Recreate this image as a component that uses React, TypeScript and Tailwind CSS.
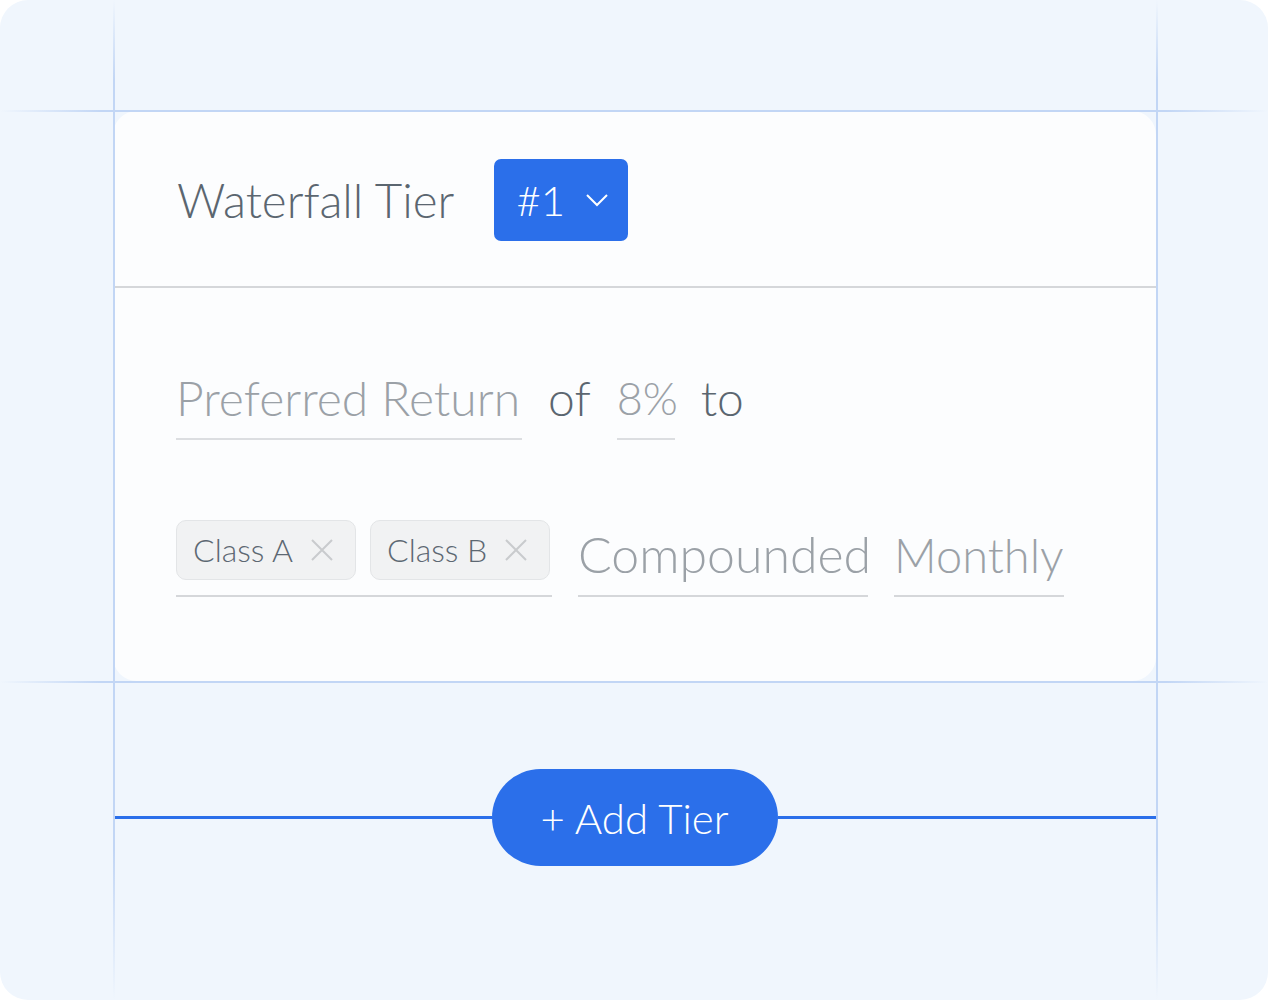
import React from 'react';

const font = { fontFamily: '"Lato", "Liberation Sans", sans-serif' };

const Chip: React.FC<{ label: string }> = ({ label }) => (
  <div className="flex items-center h-[60px] pl-[16px] pr-[22px] gap-[18px] rounded-[10px] bg-[#f1f2f3] border border-[#e3e5e7]">
    <span className="text-[32px] font-light text-[#5d6872] leading-none whitespace-nowrap">{label}</span>
    <svg width="22" height="22" viewBox="0 0 22 22" className="text-[#c9cbcd]">
      <path d="M1 1 L21 21 M21 1 L1 21" stroke="currentColor" strokeWidth="2" fill="none" />
    </svg>
  </div>
);

const Field: React.FC<{ text: string; w: string; size: string; line: string }> = ({ text, w, size, line }) => (
  <div className={`flex flex-col gap-[16px] ${w}`}>
    <span className={`${size} font-light text-[#9ba1a7] leading-[1] whitespace-nowrap`}>{text}</span>
    <div className={`h-[2px] ${line}`} />
  </div>
);

export default function App() {
  return (
    <div className="w-[1268px] h-[1000px] bg-white" style={font}>
      <div className="relative w-full h-full rounded-[28px] bg-[#f0f6fd] overflow-hidden pt-[111px] pl-[113px]">
        {/* card */}
        <div className="relative w-[1043px] h-[570px] bg-[#fcfdfe] rounded-[24px] flex flex-col">
          <div className="h-[177px] flex items-center pl-[64px] gap-[40px] border-b-2 border-[#d5d7da] pt-[2px]">
            <span className="text-[47.5px] font-light text-[#5b6670] leading-none whitespace-nowrap">Waterfall Tier</span>
            <div className="flex items-center gap-[20px] h-[82px] w-[134px] pl-[22px] rounded-[7px] bg-[#2b6fea] text-white">
              <span className="text-[42px] font-light leading-none">#1</span>
              <svg width="24" height="24" viewBox="0 0 24 24">
                <path d="M2 7 L12 17 L22 7" stroke="white" strokeWidth="2" fill="none" />
              </svg>
            </div>
          </div>

          <div className="flex flex-col pl-[63px] pt-[86px] gap-[80px]">
            <div className="flex items-end gap-[26px]">
              <Field text="Preferred Return" w="w-[346px]" size="text-[48px]" line="bg-[#dcdee1]" />
              <span className="text-[48px] font-light text-[#5b6670] leading-none pb-[18px]">of</span>
              <div className="flex flex-col gap-[17px] w-[58px]">
                <span className="text-[45px] font-light text-[#9ba1a7] leading-none whitespace-nowrap">8%</span>
                <div className="h-[2px] bg-[#dcdee1]" />
              </div>
              <span className="text-[48px] font-light text-[#5b6670] leading-none pb-[18px]">to</span>
            </div>

            <div className="flex items-end gap-[26px]">
              <div className="flex flex-col gap-[15px] w-[376px]">
                <div className="flex gap-[14px]">
                  <Chip label="Class A" />
                  <Chip label="Class B" />
                </div>
                <div className="h-[2px] bg-[#d5d7da]" />
              </div>
              <Field text="Compounded" w="w-[290px]" size="text-[50px]" line="bg-[#d5d7da]" />
              <Field text="Monthly" w="w-[170px]" size="text-[47px]" line="bg-[#d5d7da]" />
            </div>
          </div>
        </div>

        {/* add tier */}
        <div className="flex items-center w-[1043px] mt-[88px]">
          <div className="flex-1 h-[3px] bg-[#2b6fea]" />
          <button className="h-[97px] w-[286px] rounded-full bg-[#2b6fea] text-white text-[42px] font-light leading-none">
            + Add Tier
          </button>
          <div className="flex-1 h-[3px] bg-[#2b6fea]" />
        </div>

        {/* guide lines */}
        <div className="absolute left-[113px] top-0 h-full w-[1.5px] bg-[linear-gradient(to_bottom,transparent,#c2d6f5_8%,#c2d6f5_85%,transparent)]" />
        <div className="absolute left-[1156px] top-0 h-full w-[1.5px] bg-[linear-gradient(to_bottom,transparent,#c2d6f5_8%,#c2d6f5_85%,transparent)]" />
        <div className="absolute top-[110px] left-0 w-full h-[1.5px] bg-[linear-gradient(to_right,transparent,#c2d6f5_8%,#c2d6f5_92%,transparent)]" />
        <div className="absolute top-[681px] left-0 w-full h-[1.5px] bg-[linear-gradient(to_right,transparent,#c2d6f5_8%,#c2d6f5_92%,transparent)]" />
      </div>
    </div>
  );
}
